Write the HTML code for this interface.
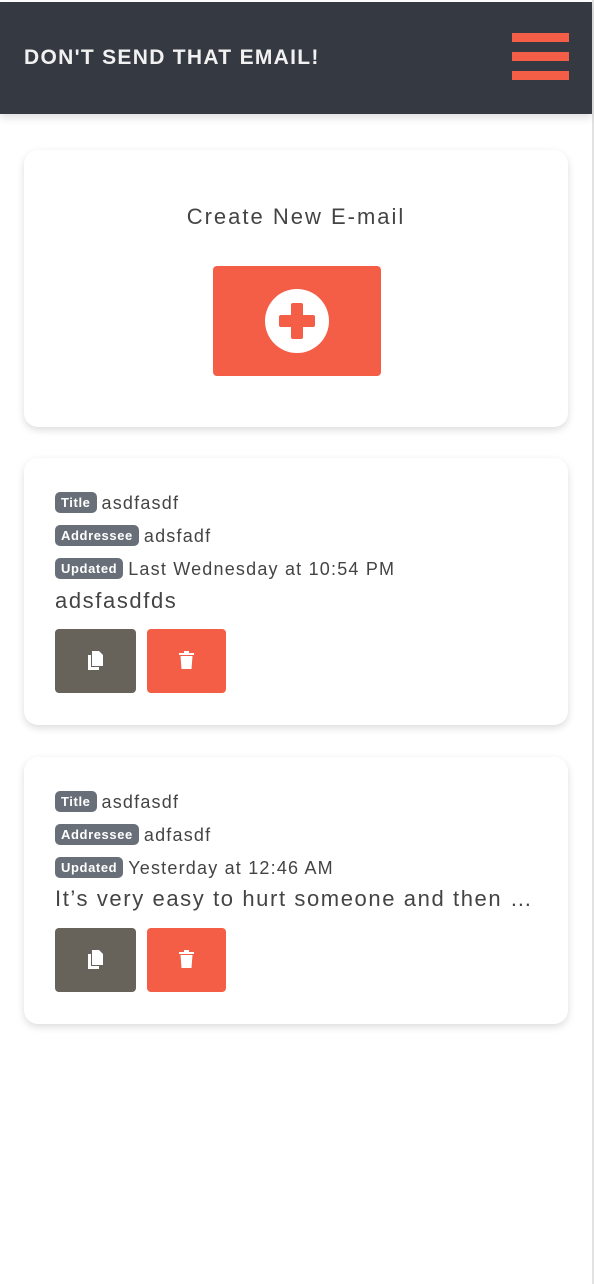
<!DOCTYPE html>
<html><head><meta charset="utf-8"><style>
*{box-sizing:border-box;margin:0;padding:0}
body{width:594px;height:1284px;background:#fff;font-family:"Liberation Sans",sans-serif;position:relative;overflow:hidden;border-right:2px solid #e2e2e2}
.hdr{position:absolute;left:0;top:2px;width:592px;height:112px;background:#353941;box-shadow:0 4px 8px rgba(0,0,0,.12)}
.hdr h1{position:absolute;left:24px;top:44px;color:#f1f1f1;font-size:21px;font-weight:bold;letter-spacing:1.3px}
.bar{position:absolute;left:512px;width:57px;height:9px;background:#f45d46}
.card{position:absolute;left:24px;width:544px;background:#fff;border-radius:14px;box-shadow:0 3px 8px rgba(0,0,0,.14)}
.row{position:absolute;left:31px;font-size:18px;color:#444;font-weight:300;white-space:nowrap;letter-spacing:1.2px}
.b{display:inline-block;background:#686f79;color:#fff;font-weight:bold;font-size:13px;padding:3px 6px;border-radius:5px;vertical-align:2px;margin-right:5px;letter-spacing:.6px}
.btn{position:absolute;top:0;height:64px;border-radius:4px}
</style></head><body>
<div class="hdr"><h1>DON'T SEND THAT EMAIL!</h1>
<div class="bar" style="top:31px"></div><div class="bar" style="top:50px"></div><div class="bar" style="top:69px"></div></div>

<div class="card" style="top:150px;height:277px">
<div style="position:absolute;top:54px;width:100%;text-align:center;font-size:22px;color:#444;font-weight:300;letter-spacing:2px">Create New E-mail</div>
<div style="position:absolute;left:189px;top:116px;width:168px;height:110px;background:#f45d46;border-radius:4px">
<div style="position:absolute;left:52px;top:23px;width:64px;height:64px;border-radius:50%;background:#fff"></div>
<div style="position:absolute;left:66px;top:49px;width:36px;height:12px;background:#f45d46;border-radius:2px"></div>
<div style="position:absolute;left:78px;top:37px;width:12px;height:36px;background:#f45d46;border-radius:2px"></div>
</div></div>

<div class="card" style="top:458px;height:267px">
<div class="row" style="top:34px"><span class="b">Title</span>asdfasdf</div>
<div class="row" style="top:67px"><span class="b">Addressee</span>adsfadf</div>
<div class="row" style="top:100px"><span class="b">Updated</span>Last Wednesday at 10:54 PM</div>
<div class="row" style="top:130px;font-size:22px;letter-spacing:1.6px">adsfasdfds</div>
<div style="position:absolute;left:31px;top:171px">
<div class="btn" style="left:0;width:81px;background:#67625a"><svg style="position:absolute;left:32px;top:22px" width="17" height="20" viewBox="0 0 17 20"><path d="M5 0h7l4 4v11H5z" fill="#fff"/><path d="M1 4h3v12h8v3H1z" fill="#fff"/></svg></div>
<div class="btn" style="left:92px;width:79px;background:#f45d46"><svg style="position:absolute;left:32px;top:22px" width="15" height="18" viewBox="0 0 15 18"><path d="M0 2h15v2H0zM5 0h5v2H5zM1.5 5h12l-1 13h-10z" fill="#fff"/></svg></div>
</div></div>

<div class="card" style="top:757px;height:267px">
<div class="row" style="top:34px"><span class="b">Title</span>asdfasdf</div>
<div class="row" style="top:67px"><span class="b">Addressee</span>adfasdf</div>
<div class="row" style="top:100px"><span class="b">Updated</span>Yesterday at 12:46 AM</div>
<div class="row" style="top:129px;font-size:22px;letter-spacing:1.6px">It’s very easy to hurt someone and then …</div>
<div style="position:absolute;left:31px;top:171px">
<div class="btn" style="left:0;width:81px;background:#67625a"><svg style="position:absolute;left:32px;top:22px" width="17" height="20" viewBox="0 0 17 20"><path d="M5 0h7l4 4v11H5z" fill="#fff"/><path d="M1 4h3v12h8v3H1z" fill="#fff"/></svg></div>
<div class="btn" style="left:92px;width:79px;background:#f45d46"><svg style="position:absolute;left:32px;top:22px" width="15" height="18" viewBox="0 0 15 18"><path d="M0 2h15v2H0zM5 0h5v2H5zM1.5 5h12l-1 13h-10z" fill="#fff"/></svg></div>
</div></div>
</body></html>
